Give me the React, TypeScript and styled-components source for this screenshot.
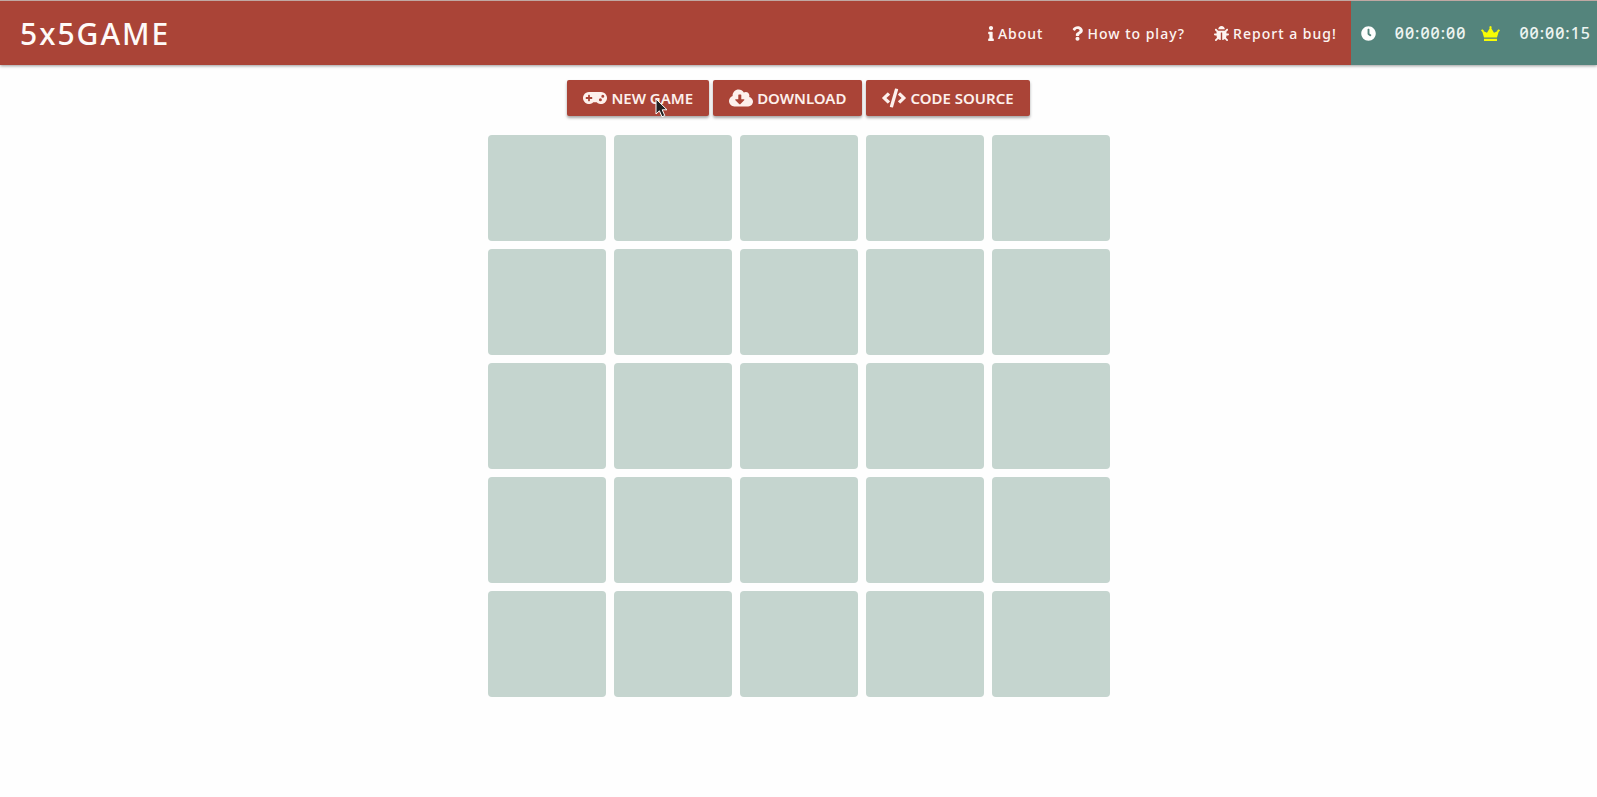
import React from "react";
import styled, { createGlobalStyle, css } from "styled-components";
import {
  FaInfo,
  FaQuestion,
  FaBug,
  FaClock,
  FaCloudDownloadAlt,
  FaCode,
  FaGamepad,
} from "react-icons/fa";

const GlobalStyle = createGlobalStyle`
  *, *::before, *::after { box-sizing: border-box; }
  body {
    margin: 0;
    background: #fefefe;
    color: #fdf5f2;
    font-family: "Noto Sans", "Open Sans", sans-serif;
    font-size: 14px;
  }
`;

const Header = styled.header`
  display: flex;
  align-items: stretch;
  min-height: 65px;
  border-top: 1px solid #c0a8a3;
  background: #aa4437;
  box-shadow: 0 1px 3px rgba(0, 0, 0, 0.4);
`;

const Logo = styled.a`
  display: flex;
  align-items: center;
  margin-right: auto;
  padding-left: 20px;
  color: #fefaf8;
  font-size: 30px;
  font-weight: 500;
  letter-spacing: 2px;
  text-decoration: none;
`;

const Nav = styled.nav`
  display: flex;
`;

const NavLink = styled.a<{ $iconWidth: number }>`
  display: flex;
  align-items: center;
  gap: 4px;
  padding: 0 14px 0 15px;
  color: #fdf5f2;
  font-size: 14px;
  font-weight: 500;
  letter-spacing: 1px;
  text-decoration: none;
  white-space: nowrap;

  svg {
    width: ${(p) => p.$iconWidth}px;
    height: 15px;
  }
`;

const Scores = styled.div`
  display: flex;
  align-items: center;
  gap: 15px;
  padding: 0 6px 0 10px;
  background: #54847c;
`;

const Score = styled.div<{ $iconColor: string }>`
  display: flex;
  align-items: center;
  gap: 19px;
  color: #eef4f1;
  font-size: 16px;
  font-weight: 500;
  font-variant-numeric: slashed-zero;
  letter-spacing: 1px;

  svg {
    color: ${(p) => p.$iconColor};
  }
`;

const Main = styled.main`
  display: flex;
  flex-direction: column;
  align-items: center;
  gap: 19px;
  padding: 15px 16px;
`;

const Actions = styled.div`
  display: flex;
  gap: 4px;
`;

const actionStyle = css`
  display: flex;
  align-items: center;
  gap: 4px;
  height: 36px;
  padding: 0 16px;
  border: 0;
  border-radius: 2px;
  background: #aa4437;
  box-shadow: 0 2px 3px rgba(0, 0, 0, 0.35);
  color: #fdf0ec;
  font-family: inherit;
  font-size: 15px;
  font-weight: 600;
  text-transform: uppercase;
  text-decoration: none;
  white-space: nowrap;
  cursor: pointer;
`;

const ActionButton = styled.button`
  ${actionStyle}
`;

const ActionLink = styled.a`
  ${actionStyle}
`;

const Board = styled.div`
  display: grid;
  grid-template-columns: repeat(5, 1fr);
  gap: 8px;
  width: 100%;
  max-width: 622px;
`;

const Tile = styled.button`
  height: 106px;
  padding: 0;
  border: 0;
  border-radius: 4px;
  background: #c5d5cf;
`;

const PointerHost = styled.div`
  position: relative;
`;

const Pointer = styled.svg`
  position: absolute;
  top: 18px;
  left: 88px;
  pointer-events: none;
`;

const Crown = () => (
  <svg width="19" height="15" viewBox="0 0 19 15" fill="currentColor" aria-hidden="true">
    <path d="M3 11.4 1.4 5.9 0 4.6 1.1 3.3 2.7 4.3 2.7 5.3 6 6.7 8.6 2.4 8.3 .8 9.5 0 10.7 .8 10.4 2.4 13 6.7 16.3 5.3 16.3 4.3 17.9 3.3 19 4.6 17.6 5.9 16 11.4Z" />
    <path d="M3 12.8H16V15H3Z" />
  </svg>
);

const tiles = Array.from({ length: 25 }, (_, i) => i + 1);

export default function App() {
  return (
    <>
      <GlobalStyle />
      <Header>
        <Logo href="#">5x5GAME</Logo>
        <Nav>
          <NavLink href="#about" $iconWidth={6}>
            <FaInfo />
            About
          </NavLink>
          <NavLink href="#how" $iconWidth={11}>
            <FaQuestion />
            How to play?
          </NavLink>
          <NavLink href="#bug" $iconWidth={15}>
            <FaBug />
            Report a bug!
          </NavLink>
        </Nav>
        <Scores>
          <Score $iconColor="#fefefe">
            <FaClock size={15} />
            <span>00:00:00</span>
          </Score>
          <Score $iconColor="#f8fc04">
            <Crown />
            <span>00:00:15</span>
          </Score>
        </Scores>
      </Header>
      <Main>
        <Actions>
          <PointerHost>
            <ActionButton type="button">
              <FaGamepad size={24} />
              New game
            </ActionButton>
            <Pointer width="13" height="20" viewBox="0 0 13 20" aria-hidden="true">
              <path
                d="M1 1V16L4.4 12.8 7 18.8 9.8 17.6 7.2 11.8H12Z"
                fill="#222"
                stroke="#fff"
              />
            </Pointer>
          </PointerHost>
          <ActionButton type="button">
            <FaCloudDownloadAlt size={24} />
            Download
          </ActionButton>
          <ActionLink href="#source">
            <FaCode size={24} />
            Code source
          </ActionLink>
        </Actions>
        <Board>
          {tiles.map((n) => (
            <Tile key={n} type="button" aria-label={`Tile ${n}`} />
          ))}
        </Board>
      </Main>
    </>
  );
}
